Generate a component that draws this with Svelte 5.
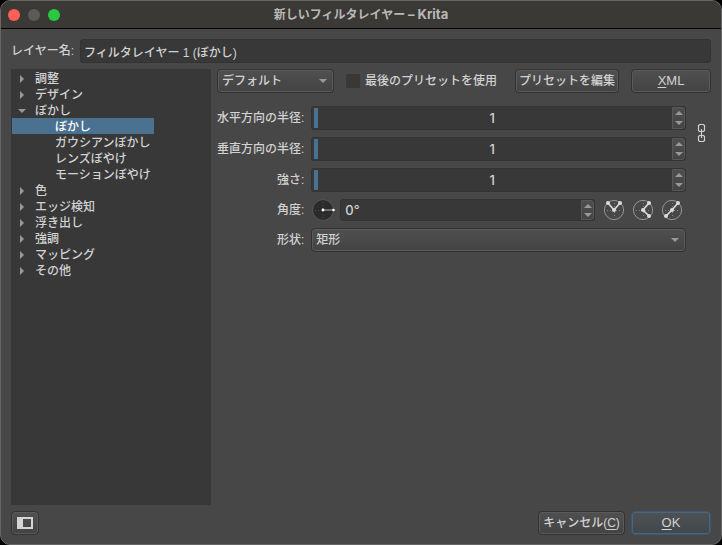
<script lang="ts">
    type Category = { name: string; open?: boolean; filters?: string[] };

    let layerName = $state('フィルタレイヤー 1 (ぼかし)');
    let selected = $state('ぼかし');
    let usePreset = $state(false);
    let linked = $state(true);
    let showTree = $state(true);
    let angle = $state(0);
    let angleText = $derived(angle + '°');

    let categories: Category[] = $state([
        { name: '調整' },
        { name: 'デザイン' },
        { name: 'ぼかし', open: true, filters: ['ぼかし', 'ガウシアンぼかし', 'レンズぼやけ', 'モーションぼやけ'] },
        { name: '色' },
        { name: 'エッジ検知' },
        { name: '浮き出し' },
        { name: '強調' },
        { name: 'マッピング' },
        { name: 'その他' },
    ]);

    let sliders = $state([
        { id: 'radius-x', label: '水平方向の半径:', value: 1, max: 100 },
        { id: 'radius-y', label: '垂直方向の半径:', value: 1, max: 100 },
        { id: 'strength', label: '強さ:', value: 1, max: 100 },
    ]);

    const flips = [
        { label: '水平に反転', points: '5,4 11,11 17,4' },
        { label: '垂直に反転', points: '17,4 11,11 17,17' },
        { label: '反対の角度', points: '17,4 11,11 5,17' },
    ];

    function step(i: number, by: number) {
        sliders[i].value = Math.min(sliders[i].max, Math.max(1, Number(sliders[i].value) + by));
        if (linked && i < 2) sliders[1 - i].value = sliders[i].value;
    }

    function flip(i: number) {
        if (i === 0) angle = (540 - angle) % 360;
        if (i === 1) angle = (360 - angle) % 360;
        if (i === 2) angle = (angle + 180) % 360;
    }
</script>

{#snippet arrows(up: () => void, down: () => void)}
    <span class="steps">
        <button type="button" aria-label="増やす" onclick={up}>
            <svg width="8" height="4" viewBox="0 0 8 4"><path d="M0 4 4 0 8 4z" /></svg>
        </button>
        <button type="button" aria-label="減らす" onclick={down}>
            <svg width="8" height="4" viewBox="0 0 8 4"><path d="M0 0h8L4 4z" /></svg>
        </button>
    </span>
{/snippet}

<div class="window">
    <header class="titlebar">
        <div class="lights">
            <button type="button" class="light close" aria-label="閉じる"></button>
            <button type="button" class="light" aria-label="しまう" disabled></button>
            <button type="button" class="light zoom" aria-label="拡大"></button>
        </div>
        <h1>新しいフィルタレイヤー <span>– Krita</span></h1>
    </header>

    <div class="content">
        <div class="name-row">
            <label for="layer-name">レイヤー名:</label>
            <input id="layer-name" class="field" type="text" bind:value={layerName} />
        </div>

        <main class="main">
            {#if showTree}
                <nav class="tree">
                    <ul>
                        {#each categories as category}
                            <li>
                                <button type="button" class="category" onclick={() => (category.open = !category.open)}>
                                    <svg width="8" height="8" viewBox="0 0 8 8">
                                        <path d={category.open ? 'M0 2h8L4 6z' : 'M2 0l4 4-4 4z'} />
                                    </svg>
                                    {category.name}
                                </button>
                                {#if category.open && category.filters}
                                    {#each category.filters as filter}
                                        <button
                                            type="button"
                                            class="filter"
                                            class:selected={filter === selected}
                                            onclick={() => (selected = filter)}>{filter}</button>
                                    {/each}
                                {/if}
                            </li>
                        {/each}
                    </ul>
                </nav>
            {/if}

            <section class="options">
                <div class="presets">
                    <div class="combo preset-combo">
                        <select aria-label="プリセット"><option>デフォルト</option></select>
                        <svg width="8" height="4" viewBox="0 0 8 4"><path d="M0 0h8L4 4z" /></svg>
                    </div>
                    <label class="check">
                        <input type="checkbox" bind:checked={usePreset} />
                        最後のプリセットを使用
                    </label>
                    <button type="button" class="btn edit">プリセットを編集</button>
                    <button type="button" class="btn wide"><u>X</u>ML</button>
                </div>

                <div class="settings">
                    <div class="form">
                        {#each sliders as slider, i}
                            <label for={slider.id}>{slider.label}</label>
                            <div class="spin">
                                <div class="track">
                                    <div class="fill" style="width: {slider.value}%"></div>
                                    <input id={slider.id} type="text" bind:value={slider.value} />
                                </div>
                                {@render arrows(() => step(i, 1), () => step(i, -1))}
                            </div>
                        {/each}

                        <label for="angle">角度:</label>
                        <div class="angle">
                            <svg class="dial" width="24" height="22" viewBox="0 0 24 22">
                                <circle cx="12" cy="11" r="10.4" fill="#2b2b2b" stroke="#565656" />
                                <path d="M4 11.5h8M12 3v17" stroke="#505050" stroke-dasharray="1 2" />
                                <g transform="rotate({-angle} 12 11)">
                                    <path d="M12 11h11" stroke="#b4b4b4" />
                                    <circle cx="12" cy="11" r="1.4" fill="#fff" />
                                    <circle cx="22.5" cy="11" r="1.3" fill="#fff" />
                                </g>
                            </svg>
                            <div class="spin">
                                <input id="angle" type="text" value={angleText} />
                                {@render arrows(() => (angle = (angle + 1) % 360), () => (angle = (angle + 359) % 360))}
                            </div>
                            <div class="flips">
                                {#each flips as item, i}
                                    <button type="button" aria-label={item.label} onclick={() => flip(i)}>
                                        <svg width="22" height="22" viewBox="0 0 22 22">
                                            <circle cx="11" cy="11" r="9.6" fill="none" stroke="#969696" />
                                            <path d="M4 11.5h15M11.5 4v15" stroke="#858585" stroke-dasharray="1 2" />
                                            <polyline points={item.points} fill="none" stroke="#d8d8d8" stroke-width="1.7" />
                                            {#each item.points.split(' ') as point}
                                                <circle cx={point.split(',')[0]} cy={point.split(',')[1]} r="2" fill="#dcdcdc" />
                                            {/each}
                                        </svg>
                                    </button>
                                {/each}
                            </div>
                        </div>

                        <label for="shape">形状:</label>
                        <div class="combo">
                            <select id="shape"><option>矩形</option><option>円形</option></select>
                            <svg width="8" height="4" viewBox="0 0 8 4"><path d="M0 0h8L4 4z" /></svg>
                        </div>
                    </div>

                    <button type="button" class="link" aria-label="縦横比を固定" onclick={() => (linked = !linked)}>
                        <svg width="9" height="20" viewBox="0 0 9 20" fill="none" stroke="#d0d0d0" stroke-width="1.2">
                            <path d="M3 8.5H2.5l-1-1v-5l1-1h4l1 1v5l-1 1H6M3 12.5H2.5l-1 1v4l1 1h4l1-1v-4l-1-1H6" />
                            {#if linked}<path d="M4.5 6v9M3 8.5h3M3 12.5h3" />{/if}
                        </svg>
                    </button>
                </div>
            </section>
        </main>

        <footer class="footer">
            <button type="button" class="btn panel" aria-label="フィルタ一覧" onclick={() => (showTree = !showTree)}>
                <svg width="16" height="12" viewBox="0 0 16 12">
                    <path d="M0 0h16v12H0zM6 2v8h8V2z" />
                </svg>
            </button>
            <button type="button" class="btn cancel">キャンセル(<u>C</u>)</button>
            <button type="button" class="btn wide default"><u>O</u>K</button>
        </footer>
    </div>
</div>

<style>
    :global(body) {
        background: #000;
    }

    .window {
        box-sizing: border-box;
        display: flex;
        flex-direction: column;
        min-height: 100vh;
        border: 1px solid #666;
        border-radius: 10px;
        overflow: hidden;
        background: #474747;
        color: #d2d2d2;
        font: 500 12px/16px 'Liberation Sans', 'Noto Sans CJK JP', sans-serif;
    }

    button,
    input,
    select {
        box-sizing: border-box;
        margin: 0;
        padding: 0;
        border: 0;
        background: none;
        color: inherit;
        font: inherit;
        outline: none;
    }

    svg {
        display: block;
        flex: none;
    }

    .titlebar {
        display: grid;
        grid-template-columns: 1fr auto 1fr;
        align-items: center;
        height: 27px;
        background: #3a3936;
        border-bottom: 1px solid #000;
    }

    .titlebar h1 {
        margin: 0;
        font: bold 12px/16px Inter, 'Noto Sans CJK JP', sans-serif;
        color: #b9b8b6;
    }

    .titlebar span {
        font-size: 13px;
    }

    .lights {
        display: flex;
        gap: 8px;
        padding-left: 7px;
    }

    .light {
        width: 12px;
        height: 12px;
        border-radius: 50%;
        background: #5c5b59;
    }

    .light.close {
        background: #ff5f57;
    }

    .light.zoom {
        background: #28c840;
    }

    .content {
        flex: 1;
        display: flex;
        flex-direction: column;
        gap: 6px;
        padding: 10px 10px 9px;
    }

    .name-row {
        display: flex;
        align-items: center;
        gap: 6px;
    }

    .field {
        flex: 1;
        min-width: 0;
        height: 24px;
        padding: 0 3px;
        border: 1px solid #333;
        border-radius: 3px;
        background: #383838;
    }

    .main {
        flex: 1;
        display: flex;
        gap: 6px;
    }

    .tree {
        width: 200px;
        flex: none;
        background: #383838;
    }

    .tree ul {
        width: fit-content;
        margin: 0;
        padding: 1px;
        list-style: none;
    }

    .tree button {
        display: flex;
        align-items: center;
        width: 100%;
        height: 16px;
        padding-top: 2px;
        white-space: nowrap;
    }

    .tree .category {
        gap: 9px;
        padding-left: 6px;
    }

    .tree .filter {
        padding-right: 3px;
        padding-left: 43px;
    }

    .tree .selected {
        background: #4a7190;
        color: #fff;
    }

    path {
        fill: #999;
    }

    path[stroke],
    .link path {
        fill: none;
    }

    .options {
        flex: 1;
        min-width: 0;
    }

    .presets {
        display: flex;
        align-items: center;
        gap: 12px;
    }

    .combo {
        display: flex;
        align-items: center;
        position: relative;
    }

    .preset-combo {
        width: 117px;
    }

    .combo select {
        appearance: none;
        width: 100%;
        padding: 0 4px;
    }

    .combo svg {
        position: absolute;
        right: 7px;
        pointer-events: none;
    }

    .combo select,
    .btn {
        height: 24px;
        border: 1px solid #333;
        border-radius: 4px;
        background: linear-gradient(#505050, #434343);
        box-shadow: inset 0 0 0 1px #5a5a5a;
        white-space: nowrap;
    }

    .check {
        display: flex;
        align-items: center;
        gap: 5px;
        white-space: nowrap;
    }

    .check input {
        appearance: none;
        width: 14px;
        height: 14px;
        background: #383838;
    }

    .check input:checked {
        background: #4a7190;
    }

    .edit {
        width: 104px;
        margin-left: auto;
    }

    .wide {
        width: 80px;
        font-size: 13px;
    }

    .btn u {
        text-underline-offset: 2px;
    }

    .settings {
        display: flex;
        align-items: flex-start;
        margin-top: 13px;
    }

    .form {
        flex: 1;
        display: grid;
        grid-template-columns: auto 1fr;
        align-items: center;
        gap: 7px;
    }

    .form label {
        text-align: right;
    }

    .spin {
        box-sizing: border-box;
        display: flex;
        flex: 1;
        min-width: 0;
        height: 24px;
        border: 1px solid #333;
        border-radius: 3px;
        background: #383838;
    }

    .spin input {
        flex: 1;
        width: 100%;
        min-width: 0;
        padding: 0 4px;
        font-family: Inter, sans-serif;
        font-size: 13px;
    }

    .track {
        flex: 1;
        display: flex;
        position: relative;
    }

    .track input {
        text-align: center;
    }

    .fill {
        position: absolute;
        top: 1px;
        bottom: 1px;
        left: 2px;
        background: #4a7190;
    }

    .steps {
        box-sizing: border-box;
        display: flex;
        flex-direction: column;
        width: 13px;
        border: 1px solid #585858;
        border-radius: 0 3px 3px 0;
        background: linear-gradient(#4e4e4e, #444);
    }

    .steps button {
        flex: 1;
        display: flex;
        align-items: center;
        justify-content: center;
    }

    .angle {
        display: flex;
        align-items: center;
        gap: 5px;
    }

    .angle .spin {
        height: 22px;
    }

    .flips {
        display: flex;
        gap: 7px;
        padding: 0 3px;
    }

    .link {
        width: 25px;
        margin-top: 17px;
        padding-left: 11px;
    }

    .footer {
        display: flex;
        gap: 6px;
    }

    .panel {
        display: flex;
        align-items: center;
        justify-content: center;
        width: 28px;
        margin-right: auto;
    }

    .panel path {
        fill: #d4d4d4;
        fill-rule: evenodd;
    }

    .cancel {
        width: 87px;
    }

    .default {
        border-color: #3a5872;
        background: linear-gradient(#4d5255, #42474a);
        box-shadow: inset 0 0 0 1px #486680;
    }
</style>
